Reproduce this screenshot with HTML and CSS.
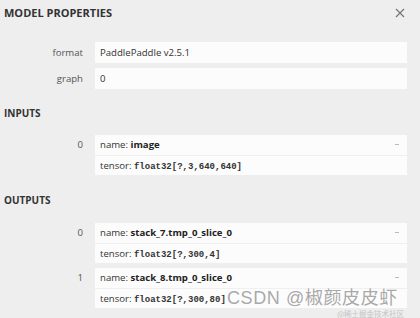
FILE: index.html
```html
<!DOCTYPE html>
<html lang="en">
<head>
    <meta charset="UTF-8">
    <title>Model Properties</title>
    <link rel="stylesheet" href="styles.css">
</head>
<body>
    <div class="sidebar">
        <div class="header">
            <div class="title">MODEL PROPERTIES</div>
            <div class="close">
                <svg width="10" height="10" viewBox="0 0 10 10">
                    <path d="M1 1L9 9M9 1L1 9" stroke="#777" stroke-width="1.2" fill="none"/>
                </svg>
            </div>
        </div>

        <div class="section meta">
            <div class="row">
                <div class="label">format</div>
                <div class="value">PaddlePaddle v2.5.1</div>
            </div>
            <div class="row">
                <div class="label">graph</div>
                <div class="value">0</div>
            </div>
        </div>

        <div class="heading">INPUTS</div>
        <div class="section">
            <div class="row">
                <div class="label index">0</div>
                <div class="card">
                    <div class="line">name: <b>image</b><span class="toggle"></span></div>
                    <div class="line">tensor: <code>float32[?,3,640,640]</code></div>
                </div>
            </div>
        </div>

        <div class="heading outputs">OUTPUTS</div>
        <div class="section">
            <div class="row">
                <div class="label index">0</div>
                <div class="card">
                    <div class="line">name: <b>stack_7.tmp_0_slice_0</b><span class="toggle"></span></div>
                    <div class="line">tensor: <code>float32[?,300,4]</code></div>
                </div>
            </div>
            <div class="row">
                <div class="label index">1</div>
                <div class="card">
                    <div class="line">name: <b>stack_8.tmp_0_slice_0</b><span class="toggle"></span></div>
                    <div class="line">tensor: <code>float32[?,300,80]</code></div>
                </div>
            </div>
        </div>
    </div>

    <div class="watermark">CSDN @椒颜皮皮虾</div>
    <div class="watermark-small">@稀土掘金技术社区</div>
</body>
</html>
```

FILE: styles.css
```css
* {
    margin: 0;
    padding: 0;
    box-sizing: border-box;
}

body {
    background: #eeeeee;
    font-family: 'Open Sans', 'Noto Sans', sans-serif;
    font-size: 9.6px;
    color: #333;
    width: 420px;
    height: 318px;
    overflow: hidden;
    position: relative;
}

.header {
    display: flex;
    justify-content: space-between;
    align-items: center;
    height: 25px;
    padding: 0 15px 0 4px;
}

.title {
    font-size: 11px;
    font-weight: bold;
    color: #333;
}

.close {
    display: flex;
}

.section {
    display: flex;
    flex-direction: column;
    gap: 5px;
    padding-right: 13px;
}

.meta {
    margin-top: 17px;
}

.row {
    display: grid;
    grid-template-columns: 83px 1fr;
    column-gap: 12px;
}

.label {
    text-align: right;
    color: #555;
    line-height: 21px;
}

.label.index {
    line-height: 20px;
}

.value {
    background: #fcfcfc;
    height: 21px;
    line-height: 21px;
    padding-left: 5px;
}

.heading {
    font-size: 10px;
    font-weight: bold;
    padding-left: 4px;
    height: 24px;
    line-height: 24px;
    margin-top: 12px;
    margin-bottom: 10px;
}

.heading.outputs {
    margin-top: 13px;
    margin-bottom: 11px;
}

.card {
    background: #fcfcfc;
}

.line {
    height: 20px;
    line-height: 20px;
    padding-left: 5px;
    position: relative;
}

.line + .line {
    border-top: 1px solid #f0f0f0;
}

.line b {
    color: #222;
}

.toggle {
    position: absolute;
    right: 8px;
    top: 9px;
    width: 4px;
    height: 1px;
    background: #bbb;
}

code {
    font-family: 'Liberation Mono', monospace;
    font-size: 9px;
    font-weight: bold;
    color: #333;
}

.watermark {
    position: absolute;
    left: 227px;
    top: 289px;
    line-height: 18px;
    font-family: 'Liberation Sans', 'Noto Sans CJK SC', sans-serif;
    font-size: 18px;
    letter-spacing: 0.6px;
    color: #a9a9a9;
    text-shadow: 0 0 2px #fff, 0 0 1px #fff;
}

.watermark-small {
    position: absolute;
    left: 337px;
    top: 310px;
    line-height: 8px;
    font-family: 'Noto Sans CJK SC', sans-serif;
    font-size: 7.5px;
    color: #c4c4c4;
}
```
